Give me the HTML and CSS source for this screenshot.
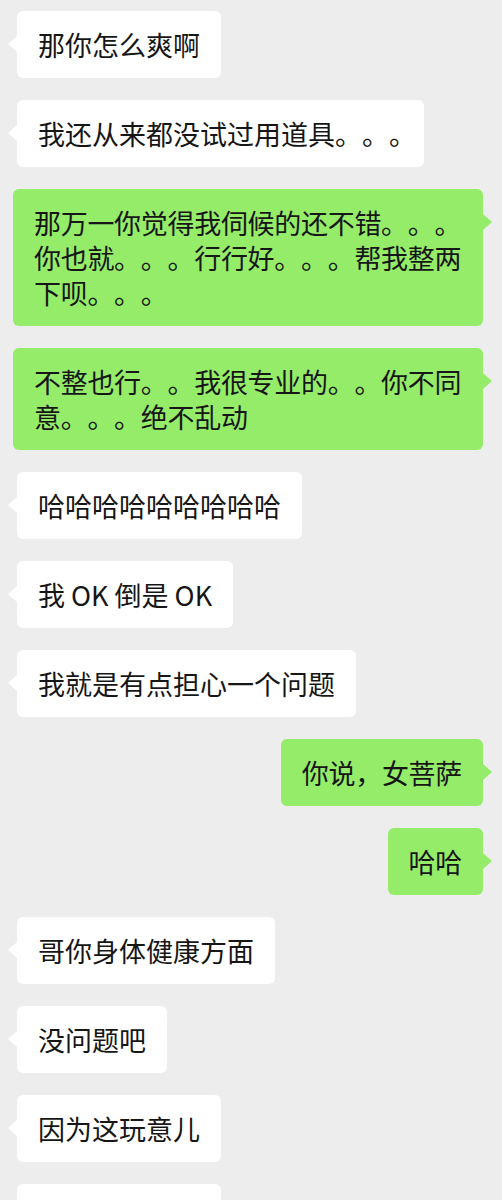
FILE: index.html
```html
<!DOCTYPE html>
<html lang="zh-CN">
    <head>
        <meta charset="UTF-8">
        <meta name="viewport" content="width=device-width, initial-scale=1.0">
        <title>聊天记录</title>
        <link rel="stylesheet" href="styles.css">
    </head>
    <body>
        <div class="chat">
            <div class="msg them"><div class="bubble">那你怎么爽啊</div></div>
            <div class="msg them"><div class="bubble">我还从来都没试过用道具。。<span class="trim">。</span></div></div>
            <div class="msg me"><div class="bubble">那万一你觉得我伺候的还不错。。<span class="trim">。</span>你也就。。。行行好。。。帮我整两下呗。。<span class="trim">。</span></div></div>
            <div class="msg me"><div class="bubble">不整也行。。我很专业的。。你不同意。。。绝不乱动</div></div>
            <div class="msg them"><div class="bubble">哈哈哈哈哈哈哈哈哈</div></div>
            <div class="msg them"><div class="bubble">我 OK 倒是 OK</div></div>
            <div class="msg them"><div class="bubble">我就是有点担心一个问题</div></div>
            <div class="msg me"><div class="bubble">你说，女菩萨</div></div>
            <div class="msg me"><div class="bubble">哈哈</div></div>
            <div class="msg them"><div class="bubble">哥你身体健康方面</div></div>
            <div class="msg them"><div class="bubble">没问题吧</div></div>
            <div class="msg them"><div class="bubble">因为这玩意儿</div></div>
            <div class="msg them"><div class="bubble">对付这玩意儿</div></div>
        </div>
    </body>
</html>
```

FILE: styles.css
```css
body {
    margin: 0;
    background-color: #ededed;
    font-family: "Noto Sans CJK SC", "Noto Sans", sans-serif;
    color: #161616;
    text-spacing-trim: space-all;
    overflow: hidden;
}
.chat {
    display: flex;
    flex-direction: column;
    gap: 22px;
    padding: 11px 19px 0 0;
}
.msg {
    display: flex;
}
.them {
    padding-left: 17px;
}
.me {
    justify-content: flex-end;
}
.bubble {
    position: relative;
    box-sizing: border-box;
    max-width: 470px;
    padding: 16px 21px;
    font-size: 27px;
    line-height: 35px;
    border-radius: 6px;
    background: #ffffff;
}
.me .bubble {
    background: #95ec69;
    letter-spacing: -0.3px;
}
.bubble::before {
    content: "";
    position: absolute;
    top: 25px;
    border-top: 8px solid transparent;
    border-bottom: 8px solid transparent;
}
.them .bubble::before {
    left: -9px;
    border-right: 9px solid #ffffff;
}
.me .bubble::before {
    right: -9px;
    border-left: 9px solid #95ec69;
}
/* line-end punctuation is set half width */
.trim {
    font-feature-settings: "halt";
}
```
